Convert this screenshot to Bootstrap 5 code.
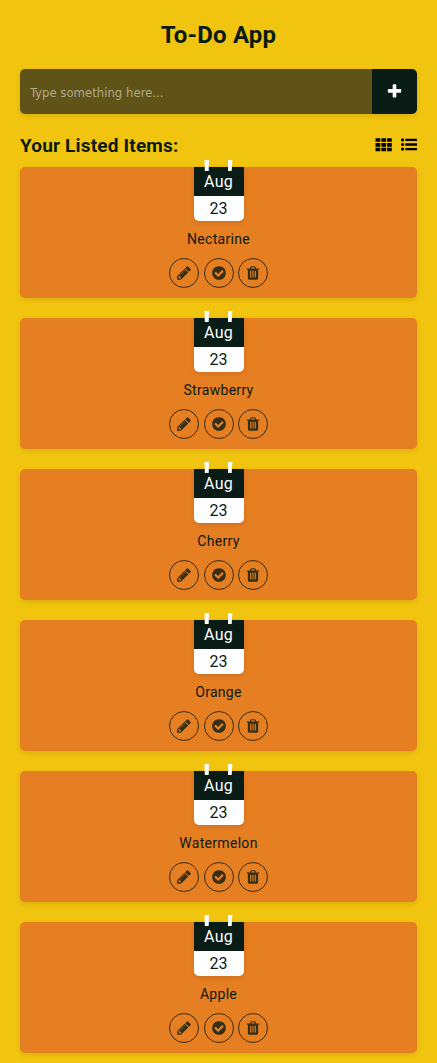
<!DOCTYPE html>
<html lang="en">
<head>
<meta charset="utf-8">
<meta name="viewport" content="width=device-width, initial-scale=1">
<title>To-Do App</title>
<link rel="stylesheet" href="https://cdn.jsdelivr.net/npm/bootstrap@5.3.0/dist/css/bootstrap.min.css">
<style>
  :root { --ink: #0a1c16; --sun: #f1c40f; --clay: #e67e22; }
  html { overflow: hidden; }
  body { background: var(--sun); color: var(--ink); font-family: Roboto, sans-serif; font-size: 16px; padding: 20px 20px 10px; }
  svg { display: block; fill: currentColor; }
  .app-title { font-size: 24px; font-weight: 700; line-height: 28px; letter-spacing: .2px; margin: 1px 0 20px; }
  .lift { box-shadow: 0 2px 5px rgba(0,0,0,.1); }
  .entry { height: 45px; border-radius: 5px; margin-bottom: 20px; overflow: hidden; }
  .entry .form-control { background: #5f5317; border: 0; border-radius: 0; color: #fff; padding: 2px 10px 0; font-family: "DejaVu Sans Condensed", "DejaVu Sans", sans-serif; font-size: 13px; font-stretch: 75%; }
  .entry .form-control::placeholder { color: #afa98b; opacity: 1; }
  .entry .btn { width: 45px; background: var(--ink); color: #fff; border: 0; border-radius: 0; padding: 0; }
  .list-title { font-size: 19px; font-weight: 700; line-height: 22px; letter-spacing: .18px; margin: 2px 0 0; }
  .list-head { height: 22px; margin-bottom: 11px; }
  .todo { background: var(--clay); border: 0; border-radius: 5px; height: 131px; color: var(--ink); }
  .date { width: 50px; line-height: 24px; border-radius: 0 0 5px 5px; background: #fff; }
  .month { background: var(--ink); color: #fff; height: 29px; line-height: 29px; letter-spacing: .2px; }
  .day { height: 25px; line-height: 25px; }
  .rings { top: -7px; left: 10px; color: #fff; }
  .todo-name { font-size: 14px; letter-spacing: .3px; line-height: 16px; margin: 10px 0 11px; }
  .acts { gap: 4.5px; }
  .acts .btn { width: 30px; height: 30px; padding: 0; border: 1px solid var(--ink); color: var(--ink); opacity: .8; }
  .views { gap: 9px; }
</style>
</head>
<body>
<svg class="d-none" aria-hidden="true">
  <symbol id="i-pencil" viewBox="0 0 1792 1792"><path d="M491 1536l91-91-235-235-91 91v107h128v128h107zm523-928q0-22-22-22-10 0-17 7l-542 542q-7 7-7 17 0 22 22 22 10 0 17-7l542-542q7-7 7-17zm-54-192l416 416-832 832h-416v-416zm683 96q0 53-37 90l-166 166-416-416 166-165q36-38 90-38 53 0 91 38l235 234q37 39 37 91z"/></symbol>
  <symbol id="i-check" viewBox="0 0 1792 1792"><path d="M1412 734q0-28-18-46l-91-90q-19-19-45-19t-45 19l-408 407-226-226q-19-19-45-19t-45 19l-91 90q-18 18-18 46 0 27 18 45l362 362q19 19 45 19 27 0 46-19l543-543q18-18 18-45zm252 162q0 209-103 385.5t-279.5 279.5-385.5 103-385.5-103-279.5-279.5-103-385.5 103-385.5 279.5-279.5 385.5-103 385.5 103 279.5 279.5 103 385.5z"/></symbol>
  <symbol id="i-trash" viewBox="0 0 1792 1792"><path d="M704 1376v-704q0-14-9-23t-23-9h-64q-14 0-23 9t-9 23v704q0 14 9 23t23 9h64q14 0 23-9t9-23zm256 0v-704q0-14-9-23t-23-9h-64q-14 0-23 9t-9 23v704q0 14 9 23t23 9h64q14 0 23-9t9-23zm256 0v-704q0-14-9-23t-23-9h-64q-14 0-23 9t-9 23v704q0 14 9 23t23 9h64q14 0 23-9t9-23zm-544-992h448l-48-117q-7-9-17-11h-317q-10 2-17 11zm928 32v64q0 14-9 23t-23 9h-96v948q0 83-47 143.500t-113 60.500h-832q-66 0-113-58.500t-47-141.500v-952h-96q-14 0-23-9t-9-23v-64q0-14 9-23t23-9h309l70-167q15-37 54-63t79-26h320q40 0 79 26t54 63l70 167h309q14 0 23 9t9 23z"/></symbol>
</svg>

<h1 class="app-title text-center">To-Do App</h1>

<form class="entry lift d-flex">
  <input class="form-control flex-fill" type="text" placeholder="Type something here...">
  <button class="btn d-flex align-items-center justify-content-center flex-shrink-0" type="button" aria-label="Add">
    <svg width="17" height="17" viewBox="0 0 1792 1792"><path d="M1600 736v192q0 40-28 68t-68 28h-416v416q0 40-28 68t-68 28h-192q-40 0-68-28t-28-68v-416h-416q-40 0-68-28t-28-68v-192q0-40 28-68t68-28h416v-416q0-40 28-68t68-28h192q40 0 68 28t28 68v416h416q40 0 68 28t28 68z"/></svg>
  </button>
</form>

<div class="list-head d-flex align-items-center justify-content-between">
  <h2 class="list-title">Your Listed Items:</h2>
  <div class="views d-flex text-black">
    <svg width="17" height="14" viewBox="0 0 17 14"><path d="M.5 .3h4.800v3.500H.5zM6.400 .3h4.700v3.500H6.400zM12.100 .3H16.800v3.500h-4.700zM.5 5h4.800v3.700H.5zM6.400 5h4.700v3.700H6.400zM12.100 5H16.800v3.700h-4.700zM.5 9.800h4.800v3.500H.5zM6.400 9.800h4.700v3.500H6.400zM12.100 9.800H16.800v3.500h-4.700z"/></svg>
    <svg width="16" height="14" viewBox="0 0 16 14"><circle cx="1.600" cy="1.900" r="1.600"/><circle cx="1.600" cy="6.500" r="1.600"/><circle cx="1.600" cy="11.100" r="1.600"/><path d="M4.300 .7H16v2.400H4.300zM4.300 5.300H16v2.400H4.300zM4.300 9.900H16v2.400H4.300z"/></svg>
  </div>
</div>

<main id="list" class="d-flex flex-column" style="gap:20px"></main>

<template id="row">
  <article class="todo lift d-flex flex-column align-items-center">
    <div class="date lift position-relative text-center">
      <svg class="rings position-absolute" width="30" height="11" viewBox="0 0 30 11"><path d="M.5 0H5l-.3 11H.8zM24 0h4.300l-.6 11h-3.700z"/></svg>
      <div class="month">Aug</div>
      <div class="day">23</div>
    </div>
    <p class="todo-name"></p>
    <div class="acts d-flex">
      <button class="btn rounded-circle d-flex align-items-center justify-content-center" aria-label="Edit"><svg width="16" height="16"><use href="#i-pencil"/></svg></button>
      <button class="btn rounded-circle d-flex align-items-center justify-content-center" aria-label="Done"><svg width="16" height="16"><use href="#i-check"/></svg></button>
      <button class="btn rounded-circle d-flex align-items-center justify-content-center" aria-label="Delete"><svg width="16" height="16"><use href="#i-trash"/></svg></button>
    </div>
  </article>
</template>

<script>
  const list = document.getElementById('list');
  const row = document.getElementById('row');
  ['Nectarine', 'Strawberry', 'Cherry', 'Orange', 'Watermelon', 'Apple'].forEach(name => {
    const item = row.content.cloneNode(true);
    item.querySelector('.todo-name').textContent = name;
    list.append(item);
  });
</script>
<script src="https://cdn.jsdelivr.net/npm/bootstrap@5.3.0/dist/js/bootstrap.bundle.min.js"></script>
</body>
</html>
